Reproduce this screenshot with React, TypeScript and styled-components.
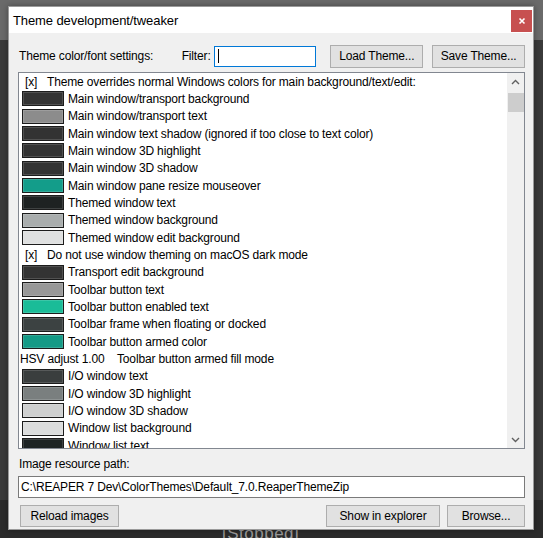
import React from "react";
import styled, { createGlobalStyle } from "styled-components";

const Global = createGlobalStyle`
  html, body { margin: 0; padding: 0; }
  body {
    width: 543px; height: 538px; overflow: hidden;
    font-family: "Liberation Sans", Arial, sans-serif;
    background: linear-gradient(180deg, #6a6a6a 0px, #6a6a6a 40px, #3a3a3a 40px, #3a3a3a 500px, #2b2b2b 500px);
  }
  * { box-sizing: border-box; }
`;

const Desktop = styled.div`
  position: relative;
  width: 543px;
  height: 538px;
  padding: 6px 0 0 8px;
`;

const StoppedLabel = styled.div`
  position: absolute;
  left: 222px;
  top: 524px;
  font-size: 17px;
  color: #9a9a9a;
  letter-spacing: 0.5px;
`;

const Dialog = styled.div`
  position: relative;
  width: 526px;
  height: 524px;
  background: #f0f0f0;
  border: 1px solid #9a9a9a;
  display: flex;
  flex-direction: column;
  box-shadow: 0 0 6px rgba(0, 0, 0, 0.35);
`;

const TitleBar = styled.div`
  height: 26px;
  background: #ffffff;
  display: flex;
  align-items: center;
  justify-content: space-between;
  padding: 0 0 0 4px;
  font-size: 13px;
  letter-spacing: -0.1px;
  color: #000;
`;

const CloseButton = styled.div`
  width: 21px;
  height: 22px;
  margin-right: 1px;
  margin-top: 2px;
  background: #c75050;
  display: flex;
  align-items: center;
  justify-content: center;
`;

const Body = styled.div`
  flex: 1;
  display: flex;
  flex-direction: column;
  padding: 11px 8px 0 9px;
  font-size: 12px;
  letter-spacing: -0.15px;
  color: #000;
`;

const TopRow = styled.div`
  display: flex;
  align-items: center;
  height: 24px;
`;

const Label = styled.span<{ $w?: number; $indent?: number }>`
  display: inline-block;
  width: ${(p) => (p.$w ? `${p.$w}px` : "auto")};
  padding-left: ${(p) => p.$indent ?? 0}px;
  white-space: nowrap;
`;

const FilterInput = styled.div`
  width: 103px;
  height: 21px;
  margin-left: 3px;
  border: 1px solid #0078d7;
  background: #fff;
  display: flex;
  align-items: center;
  padding-left: 3px;
`;

const Caret = styled.div`
  width: 1px;
  height: 14px;
  background: #000;
`;

const Button = styled.div<{ $w: number; $ml?: number; $h?: number }>`
  width: ${(p) => p.$w}px;
  height: ${(p) => p.$h ?? 23}px;
  margin-left: ${(p) => p.$ml ?? 0}px;
  background: #e1e1e1;
  border: 1px solid #adadad;
  display: flex;
  align-items: center;
  justify-content: center;
  white-space: nowrap;
`;

const ListBox = styled.div`
  margin-top: 4px;
  height: 377px;
  border: 1px solid #828790;
  background: #fff;
  display: flex;
  overflow: hidden;
`;

const ListContent = styled.div`
  flex: 1;
  overflow: hidden;
  display: flex;
  flex-direction: column;
`;

const Row = styled.div`
  height: 17.33px;
  flex: none;
  display: flex;
  align-items: center;
  white-space: nowrap;
`;

const Swatch = styled.div<{ $c: string }>`
  width: 42px;
  height: 15px;
  margin-left: 3px;
  margin-right: 4px;
  background: ${(p) => p.$c};
  border: 1px solid #1c1c1c;
  box-shadow: inset 0 0 0 1px rgba(255, 255, 255, 0.15);
  flex: none;
`;

const CheckMark = styled.span`
  display: inline-block;
  width: 28px;
  padding-left: 6px;
`;

const ScrollBar = styled.div`
  width: 17px;
  background: #f0f0f0;
  display: flex;
  flex-direction: column;
  align-items: center;
`;

const Arrow = styled.div`
  height: 17px;
  width: 17px;
  display: flex;
  align-items: center;
  justify-content: center;
`;

const Thumb = styled.div`
  width: 16px;
  height: 19px;
  margin-top: 3px;
  background: #cdcdcd;
`;

const Track = styled.div`
  flex: 1;
`;

const PathLabel = styled.div`
  margin-top: 8px;
  height: 15px;
  line-height: 15px;
  padding-left: 1px;
`;

const PathInput = styled.div`
  margin-top: 4px;
  height: 22px;
  border: 1px solid #7a7a7a;
  background: #fff;
  display: flex;
  align-items: center;
  padding-left: 2px;
  white-space: nowrap;
`;

const BottomRow = styled.div`
  margin-top: 7px;
  display: flex;
  align-items: center;
  padding-left: 2px;
`;

const Spacer = styled.div`
  flex: 1;
`;

type Item =
  | { kind: "color"; c: string; t: string }
  | { kind: "check"; t: string }
  | { kind: "hsv"; a: string; t: string };

const items: Item[] = [
  { kind: "check", t: "Theme overrides normal Windows colors for main background/text/edit:" },
  { kind: "color", c: "#333333", t: "Main window/transport background" },
  { kind: "color", c: "#8c8c8c", t: "Main window/transport text" },
  { kind: "color", c: "#333333", t: "Main window text shadow (ignored if too close to text color)" },
  { kind: "color", c: "#333333", t: "Main window 3D highlight" },
  { kind: "color", c: "#333333", t: "Main window 3D shadow" },
  { kind: "color", c: "#139d8a", t: "Main window pane resize mouseover" },
  { kind: "color", c: "#1e2222", t: "Themed window text" },
  { kind: "color", c: "#a9adad", t: "Themed window background" },
  { kind: "color", c: "#dfe0e0", t: "Themed window edit background" },
  { kind: "check", t: "Do not use window theming on macOS dark mode" },
  { kind: "color", c: "#333333", t: "Transport edit background" },
  { kind: "color", c: "#989898", t: "Toolbar button text" },
  { kind: "color", c: "#1abc98", t: "Toolbar button enabled text" },
  { kind: "color", c: "#3c4242", t: "Toolbar frame when floating or docked" },
  { kind: "color", c: "#149a86", t: "Toolbar button armed color" },
  { kind: "hsv", a: "HSV adjust 1.00", t: "Toolbar button armed fill mode" },
  { kind: "color", c: "#3a3e3e", t: "I/O window text" },
  { kind: "color", c: "#7a7f7f", t: "I/O window 3D highlight" },
  { kind: "color", c: "#cfd0d0", t: "I/O window 3D shadow" },
  { kind: "color", c: "#dcdddd", t: "Window list background" },
  { kind: "color", c: "#1e2424", t: "Window list text" },
];

const Chevron = ({ up }: { up: boolean }) => (
  <svg width="9" height="6" viewBox="0 0 9 6">
    <path
      d={up ? "M1 5 L4.5 1.5 L8 5" : "M1 1 L4.5 4.5 L8 1"}
      fill="none"
      stroke="#606060"
      strokeWidth="1.4"
    />
  </svg>
);

export default function App() {
  return (
    <>
      <Global />
      <Desktop>
        <StoppedLabel>[Stopped]</StoppedLabel>
        <Dialog>
          <TitleBar>
            <span>Theme development/tweaker</span>
            <CloseButton>
              <svg width="8" height="8" viewBox="0 0 8 8">
                <path d="M1.5 1.5 L6.5 6.5 M6.5 1.5 L1.5 6.5" stroke="#fff" strokeWidth="1.6" />
              </svg>
            </CloseButton>
          </TitleBar>
          <Body>
            <TopRow>
              <Label $w={164} $indent={1}>Theme color/font settings:</Label>
              <Label>Filter:</Label>
              <FilterInput>
                <Caret />
              </FilterInput>
              <Button $w={93} $ml={14}>Load Theme...</Button>
              <Button $w={93} $ml={9}>Save Theme...</Button>
            </TopRow>
            <ListBox>
              <ListContent>
                {items.map((it, i) => {
                  if (it.kind === "color")
                    return (
                      <Row key={i}>
                        <Swatch $c={it.c} />
                        {it.t}
                      </Row>
                    );
                  if (it.kind === "check")
                    return (
                      <Row key={i}>
                        <CheckMark>[x]</CheckMark>
                        {it.t}
                      </Row>
                    );
                  return (
                    <Row key={i}>
                      <Label $w={98} $indent={1}>{it.a}</Label>
                      {it.t}
                    </Row>
                  );
                })}
              </ListContent>
              <ScrollBar>
                <Arrow>
                  <Chevron up />
                </Arrow>
                <Thumb />
                <Track />
                <Arrow>
                  <Chevron up={false} />
                </Arrow>
              </ScrollBar>
            </ListBox>
            <PathLabel>Image resource path:</PathLabel>
            <PathInput>C:\REAPER 7 Dev\ColorThemes\Default_7.0.ReaperThemeZip</PathInput>
            <BottomRow>
              <Button $w={99} $h={22}>Reload images</Button>
              <Spacer />
              <Button $w={114} $h={22}>Show in explorer</Button>
              <Button $w={78} $h={22} $ml={7}>Browse...</Button>
            </BottomRow>
          </Body>
        </Dialog>
      </Desktop>
    </>
  );
}
